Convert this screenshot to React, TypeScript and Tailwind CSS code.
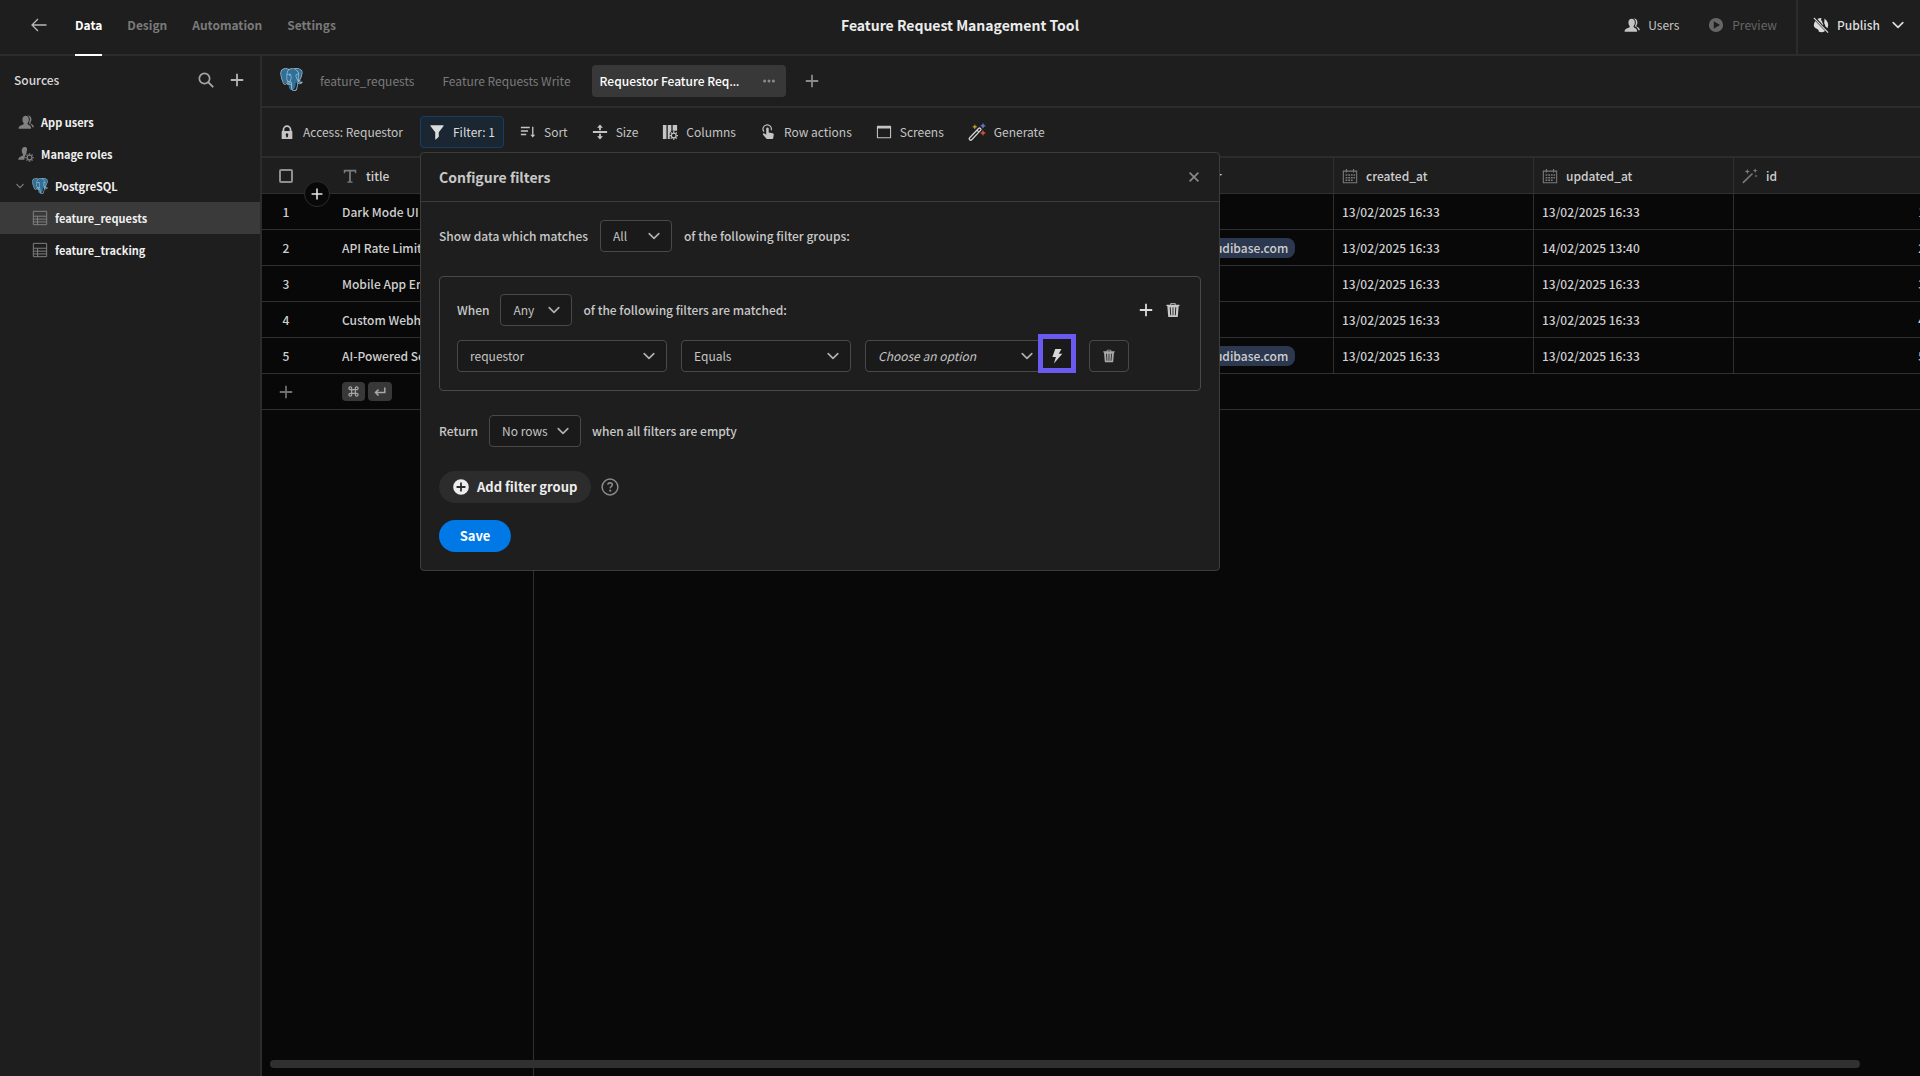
import React from "react";
import { SiPostgresql } from "react-icons/si";

type IconProps = { className?: string };

function Svg({ className = "size-4", children, box = "0 0 18 18" }: IconProps & { children: React.ReactNode; box?: string }) {
  return (
    <svg viewBox={box} className={`shrink-0 ${className}`} fill="currentColor" aria-hidden="true">
      {children}
    </svg>
  );
}

const Plus = ({ className }: IconProps) => (
  <Svg className={className}>
    <path d="M8 2h2v6h6v2h-6v6H8v-6H2V8h6z" />
  </Svg>
);
const Chevron = ({ className }: IconProps) => (
  <Svg className={className} box="0 0 10 10">
    <path d="M1 3l4 4 4-4" fill="none" stroke="currentColor" strokeWidth="1.400" strokeLinecap="round" strokeLinejoin="round" />
  </Svg>
);
const Person = "M11.4 11.9c-.6-.2-.7-.6-.7-1.100 0-.5.3-.8.6-1.300.6-.9.9-2.100.9-3.400C12.200 3.400 10.700 2 8.600 2S5 3.400 5 6.100c0 1.300.3 2.500.9 3.400.3.500.6.800.6 1.300s-.1.900-.7 1.100C2.800 12.900.6 13.600.6 16.500h14.200c0-2.900-1.200-3.600-3.400-4.600z";
const Users = ({ className }: IconProps) => (
  <Svg className={className}>
    <path d={Person} />
    <path d="M14.400 11c-.5-.2-.6-.5-.6-.9 0-.4.2-.7.5-1.100.5-.8.8-1.800.8-2.900 0-3-1.900-4.700-4.500-4.400 1.700.7 2.700 2.200 2.700 4.300 0 1.500-.3 2.700-.9 3.800-.2.300-.3.700 0 .9 2.100.9 3.400 1.800 3.700 4.300h1.700c0-2.500-1.400-3.200-3.400-4z" />
  </Svg>
);
const Gear = ({ x, y }: { x: number; y: number }) => (
  <g transform={`translate(${x} ${y})`} fill="none" stroke="currentColor">
    <circle r="2.700" strokeWidth="1.400" />
    <path strokeWidth="1.500" d="M0-4.800v1.600M0 3.200v1.600M-4.800 0h1.600M3.200 0h1.600M-3.400-3.400l1.100 1.100M2.300 2.300l1.100 1.100M-3.400 3.400l1.100-1.100M2.300-2.300l1.100-1.100" />
  </g>
);
const Roles = ({ className }: IconProps) => (
  <Svg className={className}>
    <path d="M8.200 10.800c0-.5.300-.8.600-1.300.6-.9.900-2.100.9-3.400C11 2.600 9.700 1 7.600 1S4.200 2.600 4.200 5.200c0 1.300.3 2.500.9 3.400.3.500.6.800.6 1.300s-.1.900-.7 1.100C2.300 12 .3 12.700.3 15.500h6.900c.1-1.800.3-3.300 1-4.700z" />
    <Gear x={13} y={13} />
  </Svg>
);
const Table = ({ className }: IconProps) => (
  <Svg className={className}>
    <path d="M1.500 1.500h15v15h-15zM1.500 7h15M1.500 10.300h15M1.500 13.400h15M6.300 7v9.500" fill="none" stroke="currentColor" strokeWidth="1.100" />
  </Svg>
);
const Search = ({ className }: IconProps) => (
  <Svg className={className}>
    <circle cx="7.300" cy="7.300" r="5.800" fill="none" stroke="currentColor" strokeWidth="1.900" />
    <path d="M11.700 11.700l4.800 4.800" stroke="currentColor" strokeWidth="2.200" strokeLinecap="round" />
  </Svg>
);
const Lock = ({ className }: IconProps) => (
  <Svg className={className}>
    <path fillRule="evenodd" d="M14.500 8H14V6.500a5 5 0 0 0-10 0V8h-.5a.5.500 0 0 0-.5.500v8a.5.500 0 0 0 .5.500h11a.5.500 0 0 0 .5-.5v-8a.5.500 0 0 0-.5-.5zM6 6.500a3 3 0 0 1 6 0V8H6zm4 6.700V15H8v-1.800a1.500 1.500 0 1 1 2 0z" />
  </Svg>
);
const Funnel = ({ className }: IconProps) => (
  <Svg className={className}>
    <path d="M16 1.500H2a.5.500 0 0 0-.4.800L7 9.200v7.900a.4.400 0 0 0 .7.300l3-2.700c.2-.2.300-.4.300-.700V9.200l5.400-6.900a.5.500 0 0 0-.4-.8z" />
  </Svg>
);
const Sort = ({ className }: IconProps) => (
  <Svg className={className}>
    <path d="M1 3h10v1.700H1zM1 7h8v1.700H1zM1 11h6v1.700H1zM13.600 3h1.500v9h2l-2.750 3.300L11.600 12h2z" />
  </Svg>
);
const Size = ({ className }: IconProps) => (
  <Svg className={className}>
    <path d="M1 8h16v2H1zM9 .5l3.300 3.600H10V7H8V4.100H5.700zM9 17.500l3.300-3.600H10V11H8v2.900H5.700z" />
  </Svg>
);
const Columns = ({ className }: IconProps) => (
  <Svg className={className}>
    <path d="M1 1h4v16H1zM6.500 1h4v6.500L8.700 10v7H6.500zM12 1h5v6.500h-5z" />
    <Gear x={13.2} y={13} />
  </Svg>
);
const Tap = ({ className }: IconProps) => (
  <Svg className={className}>
    <path d="M4.500 8.700A4.700 4.700 0 1 1 12.600 7" fill="none" stroke="currentColor" strokeWidth="1.300" />
    <path d="M7 5.300a1.400 1.400 0 0 1 2.800 0v4.200l4.400.9c.9.200 1.400.9 1.300 1.800l-.6 3.500c-.1.800-.7 1.300-1.500 1.300H8.500c-.6 0-1-.2-1.400-.7L3.400 12c-.6-.9.500-2 1.500-1.300L7 12z" />
  </Svg>
);
const Screen = ({ className }: IconProps) => (
  <Svg className={className}>
    <path fillRule="evenodd" d="M1.500 2h15a.5.500 0 0 1 .5.500v13a.5.500 0 0 1-.5.500h-15a.5.500 0 0 1-.5-.5v-13a.5.500 0 0 1 .5-.5zM2.200 5v9.800h13.600V5z" />
  </Svg>
);
const Star = ({ x, y, r, fill }: { x: number; y: number; r: number; fill?: string }) => (
  <path
    transform={`translate(${x} ${y}) scale(${r})`}
    fill={fill}
    d="M0-1L.28-.28 1 0 .28.28 0 1-.28.28-1 0-.28-.28z"
    stroke={fill}
    strokeWidth="0.200"
  />
);
const Generate = ({ className }: IconProps) => (
  <Svg className={className}>
    <path d="M1.700 14.800l8.800-9.300a1.300 1.300 0 0 1 2 1.900L3.700 16.700a1.300 1.300 0 0 1-2-1.900zM9 7.200l2 1.900" fill="none" stroke="#d0d0d0" strokeWidth="1.300" />
    <Star x={6.8} y={3.8} r={2.1} fill="#c8a83c" />
    <Star x={15} y={2.800} r={2.4} fill="#6f7fe0" />
    <Star x={15} y={10} r={2.4} fill="#e0563f" />
  </Svg>
);
const Wand = ({ className }: IconProps) => (
  <Svg className={className}>
    <path d="M1 16.800L11.800 6.200" stroke="currentColor" strokeWidth="1.800" />
    <Star x={6} y={4} r={3} />
    <Star x={14.800} y={3} r={2.8} />
    <Star x={15.8} y={9} r={1.700} />
  </Svg>
);
const Calendar = ({ className }: IconProps) => (
  <Svg className={className}>
    <path d="M1.500 3.500h15v13h-15zM5 1v4M13 1v4" fill="none" stroke="currentColor" strokeWidth="1.200" />
    <path d="M4 7h2v1.700H4zm3 0h2v1.700H7zm3 0h2v1.700h-2zm3 0h1.700v1.700H13zM4 10h2v1.700H4zm3 0h2v1.700H7zm3 0h2v1.700h-2zm3 0h1.700v1.700H13zM4 13h2v1.700H4zm3 0h2v1.700H7zm3 0h2v1.700h-2z" />
  </Svg>
);
const TextType = ({ className }: IconProps) => (
  <Svg className={className}>
    <path d="M2 2h14v4h-1.300l-.5-2H10v10.800l2 .6v1.100H6v-1.100l2-.6V4H3.800l-.5 2H2z" />
  </Svg>
);
const Trash = ({ className }: IconProps) => (
  <Svg className={className}>
    <path fillRule="evenodd" d="M16 3h-4V2c0-.6-.4-1-1-1H7c-.6 0-1 .4-1 1v1H2a.5.500 0 0 0-.5.500V4c0 .3.200.5.500.5h.6l1 12c0 .3.200.5.500.5h9.800c.3 0 .5-.2.500-.5l1-12h.6c.3 0 .5-.2.500-.5v-.5A.5.500 0 0 0 16 3zM7 2h4v1H7zM5.300 6l.6 9h1L6.400 6zM8.500 6v9h1V6zM11.600 6l-.5 9h1l.6-9z" />
  </Svg>
);
const Bolt = ({ className }: IconProps) => (
  <Svg className={className}>
    <path d="M7 1h7l-3 5.500h4L5.500 17.500l2.300-7.500H3.800z" />
  </Svg>
);
const Globe = ({ className }: IconProps) => (
  <Svg className={className}>
    <path d="M5 2.200A8 8 0 0 1 9.700 1c-.9 1.200-.8 2.600.1 3.400 1.200 1 .4 2.200 1.300 3 .5.500.5 1.300.3 2zM12.500 1.800a8 8 0 0 1 3.700 10.800l-2.600-2.600c.4-1.300-1-1.800-1-3.500 0-1.600.8-2.800-.1-4.700zM2.600 4.400l11 11.400A8 8 0 0 1 6.500 16.600c.2-1.200-.2-2-1-2.600C4.200 13.100 1.500 12.500 1.100 10.500A8 8 0 0 1 2.600 4.400z" />
    <path d="M1 1l16 16.500" stroke="currentColor" strokeWidth="1.300" />
  </Svg>
);
const PlayCircle = ({ className }: IconProps) => (
  <Svg className={className}>
    <path fillRule="evenodd" d="M9 1a8 8 0 1 0 0 16A8 8 0 0 0 9 1zM6.500 4.800l7 4.200-7 4.200z" />
  </Svg>
);
const AddCircle = ({ className }: IconProps) => (
  <Svg className={className}>
    <path fillRule="evenodd" d="M9 .2a8.800 8.800 0 1 0 0 17.600A8.800 8.800 0 0 0 9 .2zM8 4h2v4h4v2h-4v4H8v-4H4V8h4z" />
  </Svg>
);
const Help = ({ className }: IconProps) => (
  <Svg className={className}>
    <circle cx="9" cy="9" r="7.900" fill="none" stroke="currentColor" strokeWidth="1.500" />
    <path d="M6.700 6.600C7 5.300 8 4.900 9 4.900c1.300 0 2.300.7 2.300 1.900 0 1.700-2.100 1.700-2.100 3.500" fill="none" stroke="currentColor" strokeWidth="1.600" />
    <circle cx="9.200" cy="12.700" r="1.100" />
  </Svg>
);
const Close = ({ className }: IconProps) => (
  <Svg className={className} box="0 0 10 10">
    <path d="M.6.6l8.800 8.800M9.400.6L.6 9.400" stroke="currentColor" strokeWidth="1.600" />
  </Svg>
);
const Back = ({ className }: IconProps) => (
  <Svg className={className} box="0 0 16 14">
    <path d="M7 1L1 7l6 6M1 7h14.500" fill="none" stroke="currentColor" strokeWidth="1.300" />
  </Svg>
);
const Dots = ({ className }: IconProps) => (
  <Svg className={className} box="0 0 12 12">
    <circle cx="1.600" cy="6" r="1.500" />
    <circle cx="6" cy="6" r="1.500" />
    <circle cx="10.400" cy="6" r="1.500" />
  </Svg>
);
const Return = ({ className }: IconProps) => (
  <Svg className={className} box="0 0 12 12">
    <path d="M10.800 1.500v5H2M4.500 3.500l-3 3 3 3" fill="none" stroke="currentColor" strokeWidth="1.500" />
  </Svg>
);
const Command = ({ className }: IconProps) => (
  <Svg className={className} box="0 0 12 12">
    <path d="M4 4V2.700A1.500 1.500 0 1 0 2.600 4H9.400A1.500 1.500 0 1 0 8 2.700v6.700A1.500 1.500 0 1 0 9.400 8H2.600A1.500 1.500 0 1 0 4 9.400z" fill="none" stroke="currentColor" strokeWidth="1.300" />
  </Svg>
);

function Postgres({ className = "size-4" }: IconProps) {
  return (
    <span className={`relative block shrink-0 ${className}`}>
      <svg viewBox="0 0 24 24" className="block size-full" aria-hidden="true">
        <path
          fill="#2f7099"
          d="M5 .8C2 .8.500 3 .8 6.300c.3 3.200 1.700 8.600 3.500 9.500 1.200.6 2.200-.6 3-1.300l1.500.5c.4 2.500-.3 8.200 3.700 8 3.500-.2 3.700-4 4-7.800 2.500.3 5.500-.4 6.300-2-.8-.4-2 0-2.800-.3C22 10 23.800 5.500 22.800 3.300 21 .7 17.500.5 15 1.300 11.500.3 9.500 1 8.500 1.600 7.500 1 6.500.8 5 .8z"
        />
      </svg>
      <SiPostgresql className="absolute inset-0 size-full text-[#a9c6d6]" />
    </span>
  );
}

function Select({ label, value, className }: { label: string; value: string; className: string }) {
  return (
    <span className={`relative block ${className}`}>
      <select
        aria-label={label}
        defaultValue={value}
        className="block h-8 w-full appearance-none rounded-[4px] border border-[#494949] bg-[#1a1a1a] pr-7 pl-3 leading-5 text-[#c4c4c4] outline-none"
      >
        <option>{value}</option>
      </select>
      <Chevron className="pointer-events-none absolute top-[10px] right-3 size-3 text-[#b0b0b0]" />
    </span>
  );
}

const dim = "text-[#7a7a7a]";

const navTabs = ["Design", "Automation", "Settings"];

function Header() {
  return (
    <header className="grid h-14 shrink-0 grid-cols-[1fr_auto_1fr] border-b-2 border-[#2c2c2c]">
      <nav className="flex items-center gap-[25px] pl-[31px] font-bold">
        <button aria-label="Back" className="mr-[3px] pb-1 text-[#b8b8b8]">
          <Back className="h-[14px] w-4" />
        </button>
        <a href="#data" className="-mb-0.5 flex h-14 items-center border-b-2 border-white pb-1 text-white">Data</a>
        {navTabs.map((t) => (
          <a key={t} href="#tab" className={`pb-1 ${dim}`}>{t}</a>
        ))}
      </nav>
      <h1 className="self-center pb-1 text-sm font-bold text-[#ececec]">Feature Request Management Tool</h1>
      <div className="flex items-center justify-end">
        <button className="mr-[29px] flex items-center gap-2 pb-1 text-[#c4c4c4]">
          <Users />
          Users
        </button>
        <button className="mr-[19px] flex items-center gap-2 pb-1 text-[#666666]">
          <PlayCircle />
          Preview
        </button>
        <button className="flex h-full items-center gap-2 border-l-2 border-[#2c2c2c] pr-4 pb-1 pl-[15px] font-medium text-[#dcdcdc]">
          <Globe />
          Publish
          <Chevron className="ml-1 size-3" />
        </button>
      </div>
    </header>
  );
}

function Sidebar() {
  return (
    <aside className="flex w-[262px] shrink-0 flex-col border-r-2 border-[#2c2c2c]">
      <div className="flex h-[50px] items-center pr-[15px] pb-0.5 pl-[14px] font-medium text-[#d8d8d8]">
        <h2 className="flex-1">Sources</h2>
        <button aria-label="Search sources" className="mr-[15px] text-[#a5a5a5]">
          <Search className="size-4" />
        </button>
        <button aria-label="Add source" className="text-[#b5b5b5]">
          <Plus />
        </button>
      </div>
      <nav className="text-[11px] font-bold text-[#f0f0f0]">
        <a href="#users" className="flex h-8 items-center gap-[7px] pl-[18px]">
          <Users className="size-4 text-[#808080]" />
          App users
        </a>
        <a href="#roles" className="flex h-8 items-center gap-[7px] pl-[18px]">
          <Roles className="size-4 text-[#808080]" />
          Manage roles
        </a>
        <a href="#postgres" className="flex h-8 items-center pl-4">
          <Chevron className="mr-2 size-2 text-[#808080]" />
          <Postgres className="mr-[7px] size-4" />
          PostgreSQL
        </a>
        <a href="#requests" className="flex h-8 items-center gap-[7px] bg-[#3a3a3a] pl-8">
          <Table className="size-4 text-[#808080]" />
          feature_requests
        </a>
        <a href="#tracking" className="flex h-8 items-center gap-[7px] pl-8">
          <Table className="size-4 text-[#808080]" />
          feature_tracking
        </a>
      </nav>
    </aside>
  );
}

const sourceFont = "font-['Noto_Sans_CJK_SC','Noto_Sans',sans-serif]";

function ViewTabs() {
  return (
    <div className={`flex h-[52px] shrink-0 items-center border-b-2 border-[#2c2c2c] pl-[18px] ${dim}`}>
      <Postgres className="mr-[17px] mb-1 size-[23px]" />
      <a href="#view" className="mr-7">feature_requests</a>
      <a href="#view" className="mr-[21px]">Feature Requests Write</a>
      <div className="mr-[18px] flex h-8 w-[194px] items-center justify-between rounded-[4px] bg-[#383838] pr-[11px] pl-2">
        <a href="#view" className="w-[142px] truncate font-['Noto_Sans',sans-serif] font-medium text-white">
          <span className={sourceFont}>Requestor Feature Requests</span>
        </a>
        <button aria-label="View options" className="text-[#8a8a8a]">
          <Dots className="size-3" />
        </button>
      </div>
      <button aria-label="New view" className="text-[#8a8a8a]">
        <Plus />
      </button>
    </div>
  );
}

const tool = "flex h-8 items-center gap-2 px-2";

function FilterPanel() {
  return (
    <section
      aria-label="Configure filters"
      className="absolute top-9 left-0 z-20 w-[800px] rounded-[4px] border border-[#3c3c3c] bg-[#1e1e1e] text-[#c8c8c8]"
    >
      <div className="flex h-[49px] items-center justify-between border-b border-[#3c3c3c] px-[18px]">
        <h2 className="text-sm font-bold">Configure filters</h2>
        <button aria-label="Close" className="mr-0.5 text-[#8a8a8a]">
          <Close className="size-[10px]" />
        </button>
      </div>
      <div className="flex flex-col items-start p-[18px] font-medium">
        <div className="mb-6 flex items-center gap-3">
          Show data which matches
          <Select label="Group match" value="All" className="w-[72px] font-normal" />
          of the following filter groups:
        </div>
        <div className="mb-6 w-full rounded-[4px] border border-[#494949] p-[17px]">
          <div className="mb-[14px] flex items-center gap-[11px]">
            When
            <Select label="Filter match" value="Any" className="w-[72px] font-normal" />
            <span className="flex-1">of the following filters are matched:</span>
            <button aria-label="Add filter" className="text-[#dcdcdc]">
              <Plus />
            </button>
            <button aria-label="Delete group" className="mr-0.5 text-[#c8c8c8]">
              <Trash />
            </button>
          </div>
          <div className="flex font-normal">
            <Select label="Column" value="requestor" className="mr-[14px] w-[210px]" />
            <Select label="Operator" value="Equals" className="mr-[14px] w-[170px]" />
            <Select label="Value" value="Choose an option" className="w-[180px] italic" />
            <button
              aria-label="Bind value"
              className="relative z-10 -mt-1.5 -ml-[7px] flex h-[39px] w-[38px] items-center justify-center border-[5px] border-[#6a5af0] bg-[#1a1a1a] pt-1 text-[#d8d8d8]"
            >
              <Bolt />
            </button>
            <button
              aria-label="Delete filter"
              className="ml-[13px] flex h-8 w-10 items-center justify-center rounded-[4px] border border-[#494949] text-[#a8a8a8]"
            >
              <Trash className="size-[14px]" />
            </button>
          </div>
        </div>
        <div className="mb-6 flex items-center gap-[11px]">
          Return
          <Select label="Empty behaviour" value="No rows" className="w-[92px] font-normal" />
          when all filters are empty
        </div>
        <div className="mb-[17px] flex items-center gap-[10px]">
          <button className="flex h-8 items-center gap-2 rounded-full bg-[#2c2c2c] px-[14px] text-[13px] font-bold text-[#ededed]">
            <AddCircle />
            Add filter group
          </button>
          <button aria-label="Help" className="text-[#8a8a8a]">
            <Help className="size-[18px]" />
          </button>
        </div>
        <button className="h-8 w-[72px] rounded-full bg-[#0078e6] text-[13px] font-bold text-white">Save</button>
      </div>
    </section>
  );
}

function Toolbar() {
  return (
    <div className="flex h-[50px] shrink-0 items-center gap-2 border-b-2 border-[#2c2c2c] pl-[9px] text-[#c4c4c4]">
      <button className={`mr-px ${tool}`}>
        <Lock />
        Access: Requestor
      </button>
      <div className="relative">
        <button className="flex h-8 items-center gap-2 rounded-[4px] border border-[#183d63] bg-[#1a2632] px-2 text-[#dcdcdc]">
          <Funnel />
          Filter: 1
        </button>
        <FilterPanel />
      </div>
      <button className={tool}><Sort />Sort</button>
      <button className={tool}><Size />Size</button>
      <button className={tool}><Columns />Columns</button>
      <button className={tool}><Tap />Row actions</button>
      <button className={tool}><Screen />Screens</button>
      <button className={tool}><Generate className="size-[18px]" />Generate</button>
    </div>
  );
}

type Row = { title: string; requestor?: string; created: string; updated: string };

const rows: Row[] = [
  { title: "Dark Mode UI", created: "13/02/2025 16:33", updated: "13/02/2025 16:33" },
  { title: "API Rate Limit Increase", requestor: "michael@budibase.com", created: "13/02/2025 16:33", updated: "14/02/2025 13:40" },
  { title: "Mobile App Enhancements", created: "13/02/2025 16:33", updated: "13/02/2025 16:33" },
  { title: "Custom Webhooks", created: "13/02/2025 16:33", updated: "13/02/2025 16:33" },
  { title: "AI-Powered Search", requestor: "michael@budibase.com", created: "13/02/2025 16:33", updated: "13/02/2025 16:33" },
];

const columns: { name: string; icon: React.ReactNode }[] = [
  { name: "title", icon: <TextType /> },
  { name: "description", icon: <TextType /> },
  { name: "status", icon: <TextType /> },
  { name: "priority", icon: <TextType /> },
  { name: "requestor", icon: <Users /> },
  { name: "created_at", icon: <Calendar /> },
  { name: "updated_at", icon: <Calendar /> },
  { name: "id", icon: <Wand /> },
];

const line = "border-[#303030]";
const cell = `border-r border-b ${line} px-2`;

function Grid() {
  return (
    <div className="relative flex min-h-0 flex-1 flex-col overflow-hidden bg-[#080808] font-medium text-[#cfcfcf]">
      <table className="w-[1672px] shrink-0 table-fixed border-separate border-spacing-0 text-left">
        <colgroup>
          <col className="w-[72px]" />
          {columns.map((c) => (
            <col key={c.name} className="w-[200px]" />
          ))}
        </colgroup>
        <thead>
          <tr className="h-9 bg-[#1e1e1e]">
            <th className={`relative border-b ${line} pl-[17px]`}>
              <input
                type="checkbox"
                aria-label="Select all rows"
                className="block size-[14px] appearance-none rounded-[2px] border-2 border-[#8f8f8f]"
              />
              <button
                aria-label="Add row"
                className="absolute top-[23px] left-[42px] z-10 flex size-[26px] items-center justify-center rounded-full border border-[#2c2c2c] bg-[#080808] text-[#e6e6e6]"
              >
                <Plus className="size-[14px]" />
              </button>
            </th>
            {columns.map((c) => (
              <th key={c.name} className={`${cell} font-medium`}>
                <span className="flex items-center gap-2">
                  <span className="text-[#7a7a7a]">{c.icon}</span>
                  {c.name}
                </span>
              </th>
            ))}
          </tr>
        </thead>
        <tbody>
          {rows.map((r, i) => (
            <tr key={r.title} className="h-9">
              <td className={`border-b ${line} pr-6 text-center`}>{i + 1}</td>
              <td className={`${cell} truncate`}>{r.title}</td>
              <td className={cell} />
              <td className={cell} />
              <td className={cell} />
              <td className={cell}>
                {r.requestor && (
                  <span className="block w-[153px] rounded-[8px] bg-[#2b3850] px-2 text-right leading-5">{r.requestor}</span>
                )}
              </td>
              <td className={cell}>{r.created}</td>
              <td className={cell}>{r.updated}</td>
              <td className={`${cell} text-right`}>{i + 1}</td>
            </tr>
          ))}
          <tr className="h-9">
            <td className={`border-b ${line} pl-4`}>
              <button aria-label="New row" className="block text-[#6f6f6f]">
                <Plus />
              </button>
            </td>
            <td className={cell}>
              <span className="flex gap-[3px] text-[#a8a8a8]">
                <kbd className="flex h-[19px] w-[23px] items-center justify-center rounded-[4px] bg-[#383838]"><Command className="size-[11px]" /></kbd>
                <kbd className="flex h-[19px] w-6 items-center justify-center rounded-[4px] bg-[#383838]"><Return className="size-3" /></kbd>
              </span>
            </td>
            <td colSpan={7} className={`border-b ${line}`} />
          </tr>
        </tbody>
      </table>
      <div className={`w-[272px] flex-1 border-r ${line}`} />
      <div className="absolute right-[60px] bottom-2 left-2 h-2 rounded-full bg-[#303030]" />
    </div>
  );
}

export default function App() {
  return (
    <div className="flex h-screen flex-col overflow-hidden bg-[#1e1e1e] font-['Noto_Sans_CJK_SC','Noto_Sans',sans-serif] text-xs leading-5 text-[#c8c8c8]">
      <Header />
      <div className="flex min-h-0 flex-1">
        <Sidebar />
        <main className="flex min-w-0 flex-1 flex-col">
          <ViewTabs />
          <Toolbar />
          <Grid />
        </main>
      </div>
    </div>
  );
}
